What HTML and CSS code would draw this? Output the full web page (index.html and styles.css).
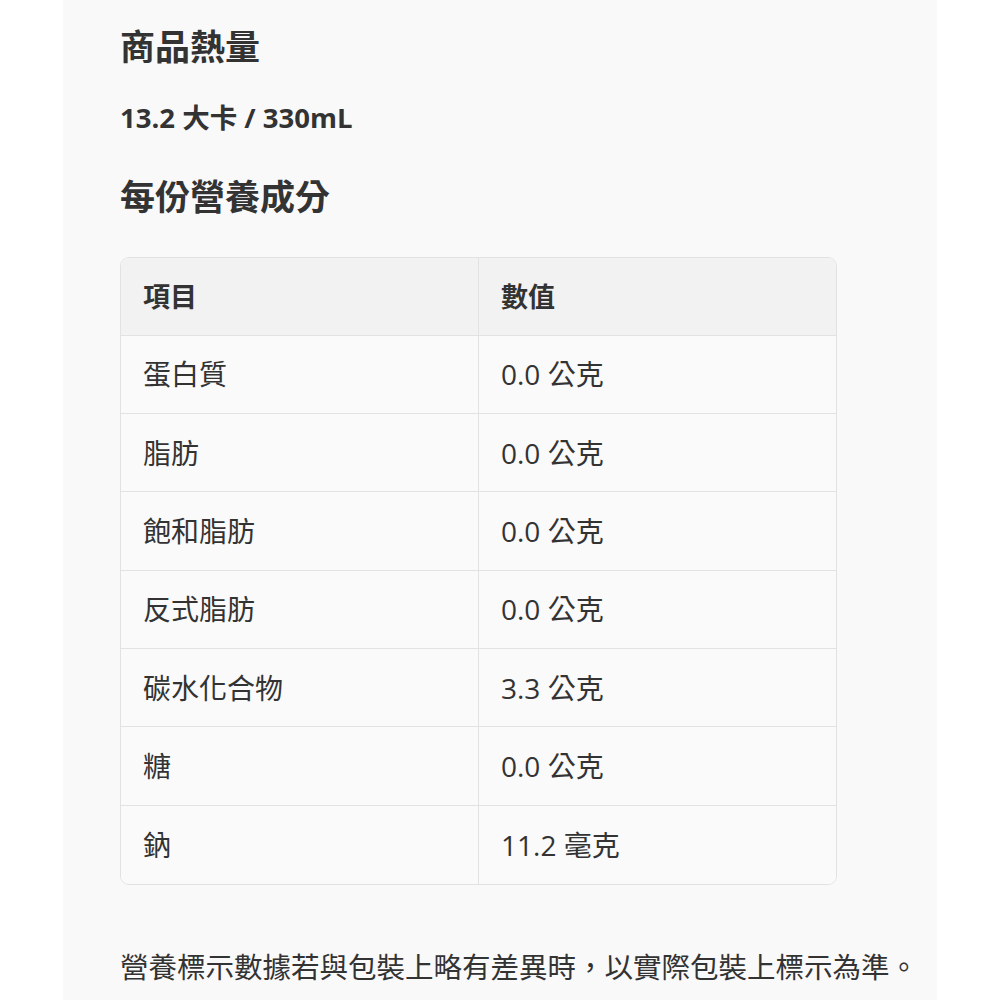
FILE: index.html
```html
<!DOCTYPE html>
<html lang="zh-Hant">
<head>
<meta charset="utf-8">
<link rel="stylesheet" href="styles.css">
</head>
<body>
<main class="panel">
  <h1 class="title">商品熱量</h1>
  <p class="calorie">13.2 大卡 / 330mL</p>
  <h2 class="title sub">每份營養成分</h2>
  <div class="table-wrap">
    <table class="nutri">
      <thead>
        <tr><th>項目</th><th>數值</th></tr>
      </thead>
      <tbody>
        <tr><td>蛋白質</td><td>0.0 公克</td></tr>
        <tr><td>脂肪</td><td>0.0 公克</td></tr>
        <tr><td>飽和脂肪</td><td>0.0 公克</td></tr>
        <tr><td>反式脂肪</td><td>0.0 公克</td></tr>
        <tr><td>碳水化合物</td><td>3.3 公克</td></tr>
        <tr><td>糖</td><td>0.0 公克</td></tr>
        <tr><td>鈉</td><td>11.2 毫克</td></tr>
      </tbody>
    </table>
  </div>
  <p class="note">營養標示數據若與包裝上略有差異時，以實際包裝上標示為準。</p>
</main>
</body>
</html>
```

FILE: styles.css
```css
html, body {
  margin: 0;
  padding: 0;
  background: #ffffff;
}
body {
  font-family: "Open Sans", "Noto Sans CJK TC", sans-serif;
  color: #333333;
}
.panel {
  margin: 0 63px;
  padding: 22px 57px 20px;
  background: #f9f9f9;
  min-height: 1000px;
  box-sizing: border-box;
}
.title {
  margin: 0;
  font-size: 35px;
  line-height: 46px;
  font-weight: 700;
  font-family: "Noto Sans CJK TC", sans-serif;
}
.calorie {
  margin: 33px 0 0;
  font-size: 27.5px;
  line-height: 34px;
  font-weight: 700;
  letter-spacing: 0;
}
.sub {
  margin-top: 37px;
}
.table-wrap {
  margin-top: 39px;
  width: 717px;
  border: 1px solid #e2e2e2;
  border-radius: 9px;
  overflow: hidden;
  box-sizing: border-box;
}
.nutri {
  width: 100%;
  border-collapse: collapse;
  table-layout: fixed;
}
.nutri th, .nutri td {
  text-align: left;
  padding: 0 0 0 22px;
  height: 78.4px;
  box-sizing: border-box;
  font-size: 28px;
  line-height: 36px;
  border-top: 1px solid #e2e2e2;
}
.nutri th + th, .nutri td + td {
  border-left: 1px solid #e2e2e2;
}
.nutri thead th {
  border-top: none;
  background: #f2f2f2;
  font-size: 27px;
  font-weight: 700;
  font-family: "Noto Sans CJK TC", sans-serif;
  height: 77px;
}
.nutri tbody td {
  background: #fafafa;
  font-weight: 400;
}
.note {
  margin: 63px -40px 0 0;
  font-size: 28.5px;
  line-height: 36px;
  white-space: nowrap;
  font-family: "Noto Sans CJK TC", sans-serif;
}
```
